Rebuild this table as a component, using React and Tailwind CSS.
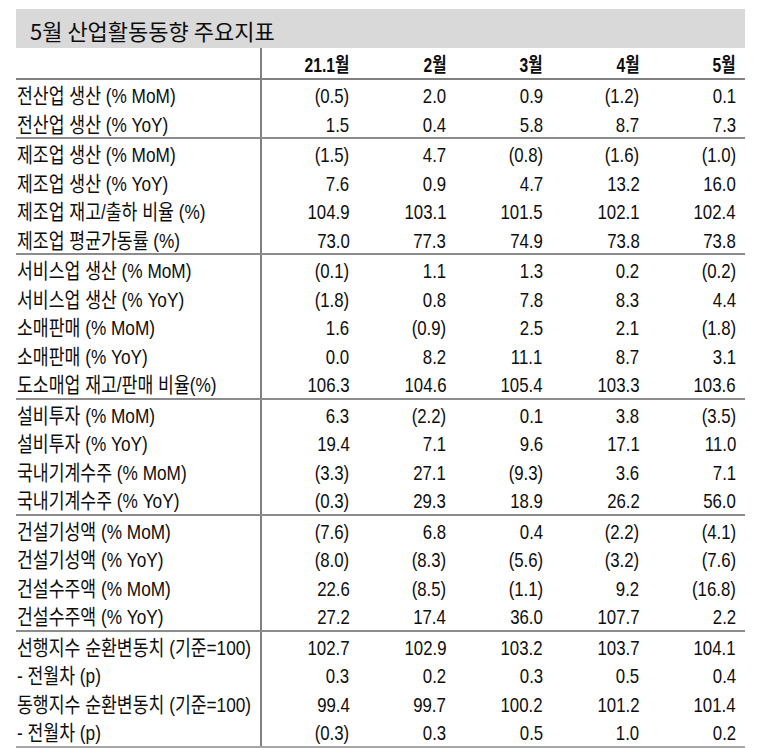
import React from 'react';

const months = ['21.1월', '2월', '3월', '4월', '5월'];

const groups = [
  [
    ['전산업 생산 (% MoM)', '(0.5)', '2.0', '0.9', '(1.2)', '0.1'],
    ['전산업 생산 (% YoY)', '1.5', '0.4', '5.8', '8.7', '7.3'],
  ],
  [
    ['제조업 생산 (% MoM)', '(1.5)', '4.7', '(0.8)', '(1.6)', '(1.0)'],
    ['제조업 생산 (% YoY)', '7.6', '0.9', '4.7', '13.2', '16.0'],
    ['제조업 재고/출하 비율 (%)', '104.9', '103.1', '101.5', '102.1', '102.4'],
    ['제조업 평균가동률 (%)', '73.0', '77.3', '74.9', '73.8', '73.8'],
  ],
  [
    ['서비스업 생산 (% MoM)', '(0.1)', '1.1', '1.3', '0.2', '(0.2)'],
    ['서비스업 생산 (% YoY)', '(1.8)', '0.8', '7.8', '8.3', '4.4'],
    ['소매판매 (% MoM)', '1.6', '(0.9)', '2.5', '2.1', '(1.8)'],
    ['소매판매 (% YoY)', '0.0', '8.2', '11.1', '8.7', '3.1'],
    ['도소매업 재고/판매 비율(%)', '106.3', '104.6', '105.4', '103.3', '103.6'],
  ],
  [
    ['설비투자 (% MoM)', '6.3', '(2.2)', '0.1', '3.8', '(3.5)'],
    ['설비투자 (% YoY)', '19.4', '7.1', '9.6', '17.1', '11.0'],
    ['국내기계수주 (% MoM)', '(3.3)', '27.1', '(9.3)', '3.6', '7.1'],
    ['국내기계수주 (% YoY)', '(0.3)', '29.3', '18.9', '26.2', '56.0'],
  ],
  [
    ['건설기성액 (% MoM)', '(7.6)', '6.8', '0.4', '(2.2)', '(4.1)'],
    ['건설기성액 (% YoY)', '(8.0)', '(8.3)', '(5.6)', '(3.2)', '(7.6)'],
    ['건설수주액 (% MoM)', '22.6', '(8.5)', '(1.1)', '9.2', '(16.8)'],
    ['건설수주액 (% YoY)', '27.2', '17.4', '36.0', '107.7', '2.2'],
  ],
  [
    ['선행지수 순환변동치 (기준=100)', '102.7', '102.9', '103.2', '103.7', '104.1'],
    ['- 전월차 (p)', '0.3', '0.2', '0.3', '0.5', '0.4'],
    ['동행지수 순환변동치 (기준=100)', '99.4', '99.7', '100.2', '101.2', '101.4'],
    ['- 전월차 (p)', '(0.3)', '0.3', '0.5', '1.0', '0.2'],
  ],
];

const Row = ({ cells }) => (
  <div className="flex h-[28.5px] items-center">
    <div className="w-[246px] h-full flex items-center border-r-2 border-[#808080] pl-px pt-[3px] whitespace-nowrap">
      <span className="inline-block origin-left scale-x-[0.82]">{cells[0]}</span>
    </div>
    {cells.slice(1).map((v, i) => (
      <div key={i} className="flex-1 h-full flex items-center justify-end pr-[9px] pt-[3px] whitespace-nowrap">
        <span className="inline-block origin-right scale-x-[0.8]">{v}</span>
      </div>
    ))}
  </div>
);

const App = () => {
  return (
    <div className="min-h-screen bg-white pl-4 pt-[9px] text-[#0d0d0d] font-['Liberation_Sans','Noto_Sans_CJK_KR',sans-serif]">
      <div className="w-[729px]">
        <div className="h-[39px] bg-[#d9d9d9] pl-[14px] pt-[3px] flex items-center text-[22px] font-['Noto_Sans_CJK_KR',sans-serif]">
          5월 산업활동동향 주요지표
        </div>

        <div className="flex h-[32px] items-center border-b-2 border-[#808080] text-[20px] font-bold">
          <div className="w-[246px] h-full border-r-2 border-[#808080]" />
          {months.map((m) => (
            <div key={m} className="flex-1 h-full flex items-center justify-end pr-[9px] pt-[3px]">
              <span className="inline-block origin-right scale-x-[0.78]">{m}</span>
            </div>
          ))}
        </div>

        <div className="text-[21px] border-b-2 border-[#a6a6a6]">
          {groups.map((g, gi) => (
            <div key={gi} className={gi > 0 ? 'border-t-2 border-[#8c8c8c]' : ''}>
              {g.map((r, ri) => (
                <Row key={ri} cells={r} />
              ))}
            </div>
          ))}
        </div>
      </div>
    </div>
  );
};

export default App;
